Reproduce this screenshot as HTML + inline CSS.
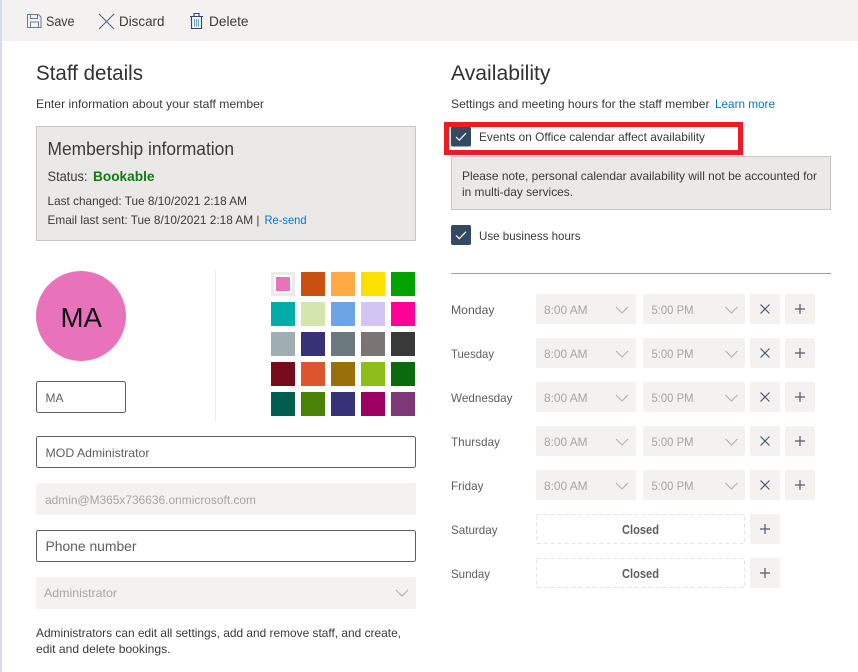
<!DOCTYPE html>
<html lang="en">
<head>
<meta charset="utf-8">
<title>Staff details</title>
<style>
html,body{margin:0;padding:0;background:#fff;width:858px;height:672px;overflow:hidden}
svg{display:block}
text{font-family:"Liberation Sans",sans-serif;font-size:12px;fill:#3b3a39}
.t{font-size:21px;fill:#323130}
.g{fill:#a8a6a4}
.l{fill:#0078d4}
.d{fill:#605e5c}
.sel{fill:#f3f2f1}
.ic{fill:none;stroke:#4f5b68;stroke-width:1.2}
.ch{fill:none;stroke:#b0aeac;stroke-width:1}
</style>
</head>
<body>
<svg width="858" height="672" viewBox="0 0 858 672" xmlns="http://www.w3.org/2000/svg">
<defs>
<g id="sl">
<rect x="536" y="0" width="100" height="30" rx="2" class="sel"/>
<rect x="643" y="0" width="102" height="30" rx="2" class="sel"/>
<rect x="750" y="0" width="30" height="30" rx="2" class="sel"/>
<rect x="785" y="0" width="30" height="30" rx="2" class="sel"/>
<path class="ch" d="M616 13l6 6 6-6M725.500 13l6 6 6-6"/>
<path class="ic" d="M760.500 10.500l9 9M769.500 10.500l-9 9M795 15h10M800 10v10"/>
</g>
<g id="cl">
<rect x="536.500" y="0.500" width="208" height="29" fill="#fff" stroke="#e6e4e2" stroke-dasharray="4 3"/>
<rect x="750" y="0" width="30" height="30" rx="2" class="sel"/>
<path class="ic" d="M760 15h10M765 10v10"/>
</g>
<g id="cb">
<rect x="451" y="0" width="20" height="20" rx="2" fill="#344a60"/>
<path d="M456 10.500l3.300 3.200 6.700-7" fill="none" stroke="#fff" stroke-width="1.200"/>
</g>
</defs>

<rect x="0" y="0" width="858" height="672" fill="#fff"/>
<rect x="0" y="0" width="858" height="41" fill="#f3f2f1"/>
<rect x="0" y="0" width="2" height="672" fill="#d5deee"/>

<!-- toolbar -->
<path d="M27.500 14.500h11l2.500 2.500v10.500h-13.500z" fill="none" stroke="#6b7ba0" stroke-width="1"/>
<path d="M30.500 14.500v4h7v-4M30.500 27.500v-5.500h8v5.500" fill="none" stroke="#6b7ba0" stroke-width="1"/>
<text x="46" y="26" style="font-size:14px" textLength="28.500" lengthAdjust="spacingAndGlyphs">Save</text>
<path d="M99 14l15 15M114 14l-15 15" fill="none" stroke="#4d5f78" stroke-width="1"/>
<text x="119" y="26" style="font-size:14px" textLength="45.500" lengthAdjust="spacingAndGlyphs">Discard</text>
<path d="M190 16.500h13M194 16v-2.500h5v2.500M191.500 16.500v12h10v-12" fill="none" stroke="#2f4a68" stroke-width="1.100"/>
<path d="M194.500 19v7.500M196.500 19v7.500M198.500 19v7.500" fill="none" stroke="#6fa0c8" stroke-width="1"/>
<text x="209" y="26" style="font-size:14px" textLength="39.500" lengthAdjust="spacingAndGlyphs">Delete</text>

<!-- staff details -->
<text class="t" x="36" y="80" textLength="107" lengthAdjust="spacingAndGlyphs">Staff details</text>
<text x="36" y="108" textLength="228" lengthAdjust="spacingAndGlyphs">Enter information about your staff member</text>
<rect x="36.500" y="126.500" width="379" height="114" fill="#ebe9e8" stroke="#c8c6c4"/>
<text x="47.500" y="155" style="font-size:18px" textLength="186.500" lengthAdjust="spacingAndGlyphs">Membership information</text>
<text x="47.500" y="181" style="font-size:14px" textLength="40" lengthAdjust="spacingAndGlyphs">Status:</text>
<text x="93" y="181" style="font-size:14px;font-weight:bold;fill:#107c10" textLength="61.500" lengthAdjust="spacingAndGlyphs">Bookable</text>
<text x="47.500" y="205" textLength="199.500" lengthAdjust="spacingAndGlyphs">Last changed: Tue 8/10/2021 2:18 AM</text>
<text x="47.500" y="224" textLength="212" lengthAdjust="spacingAndGlyphs">Email last sent: Tue 8/10/2021 2:18 AM |</text>
<text class="l" x="264.500" y="224" textLength="42" lengthAdjust="spacingAndGlyphs">Re-send</text>

<!-- avatar -->
<circle cx="81" cy="316" r="45" fill="#e873bb"/>
<text x="60.500" y="327" style="font-size:28px;fill:#111" textLength="41.500" lengthAdjust="spacingAndGlyphs">MA</text>
<rect x="36.500" y="381.500" width="89" height="31" rx="2" fill="#fff" stroke="#605e5c"/>
<text class="d" x="45.500" y="402" textLength="18" lengthAdjust="spacingAndGlyphs">MA</text>
<rect x="215" y="271" width="1" height="150" fill="#edebe9"/>

<!-- swatches -->
<rect x="271" y="272" width="24" height="24" fill="#edebe9"/>
<rect x="274" y="275" width="18" height="18" fill="#fff"/>
<rect x="276" y="277" width="14" height="14" fill="#e873bb"/>
<rect x="301" y="272" width="24" height="24" fill="#ca5010"/>
<rect x="331" y="272" width="24" height="24" fill="#ffaa44"/>
<rect x="361" y="272" width="24" height="24" fill="#fce100"/>
<rect x="391" y="272" width="24" height="24" fill="#00a300"/>
<rect x="271" y="302" width="24" height="24" fill="#03abab"/>
<rect x="301" y="302" width="24" height="24" fill="#d5e5ae"/>
<rect x="331" y="302" width="24" height="24" fill="#6ca4e6"/>
<rect x="361" y="302" width="24" height="24" fill="#d2c5f4"/>
<rect x="391" y="302" width="24" height="24" fill="#ff0097"/>
<rect x="271" y="332" width="24" height="24" fill="#a0aeb2"/>
<rect x="301" y="332" width="24" height="24" fill="#373277"/>
<rect x="331" y="332" width="24" height="24" fill="#69797e"/>
<rect x="361" y="332" width="24" height="24" fill="#7a7574"/>
<rect x="391" y="332" width="24" height="24" fill="#393939"/>
<rect x="271" y="362" width="24" height="24" fill="#750b1c"/>
<rect x="301" y="362" width="24" height="24" fill="#dc552c"/>
<rect x="331" y="362" width="24" height="24" fill="#986f0b"/>
<rect x="361" y="362" width="24" height="24" fill="#8cbd18"/>
<rect x="391" y="362" width="24" height="24" fill="#0b6a0b"/>
<rect x="271" y="392" width="24" height="24" fill="#005e50"/>
<rect x="301" y="392" width="24" height="24" fill="#498205"/>
<rect x="331" y="392" width="24" height="24" fill="#373277"/>
<rect x="361" y="392" width="24" height="24" fill="#9b0062"/>
<rect x="391" y="392" width="24" height="24" fill="#7e3877"/>

<!-- form -->
<rect x="36.500" y="436.500" width="379" height="31" rx="2" fill="#fff" stroke="#605e5c"/>
<text class="d" x="45.500" y="457" textLength="104" lengthAdjust="spacingAndGlyphs">MOD Administrator</text>
<rect x="36" y="483" width="380" height="32" rx="2" class="sel"/>
<text class="g" x="45" y="504" textLength="211" lengthAdjust="spacingAndGlyphs">admin@M365x736636.onmicrosoft.com</text>
<rect x="36.500" y="530.500" width="379" height="31" rx="2" fill="#fff" stroke="#605e5c"/>
<text class="d" x="45.500" y="551" style="font-size:14px" textLength="91" lengthAdjust="spacingAndGlyphs">Phone number</text>
<rect x="36" y="577" width="380" height="32" rx="2" class="sel"/>
<text class="g" x="44" y="597" textLength="73" lengthAdjust="spacingAndGlyphs">Administrator</text>
<path class="ch" d="M396 590l6 6 6-6"/>
<text x="36" y="637" textLength="365" lengthAdjust="spacingAndGlyphs">Administrators can edit all settings, add and remove staff, and create,</text>
<text x="36" y="653" textLength="134.500" lengthAdjust="spacingAndGlyphs">edit and delete bookings.</text>

<!-- availability -->
<text class="t" x="451" y="80" textLength="99.500" lengthAdjust="spacingAndGlyphs">Availability</text>
<text x="451" y="108" textLength="258.500" lengthAdjust="spacingAndGlyphs">Settings and meeting hours for the staff member</text>
<text class="l" x="715" y="108" textLength="60" lengthAdjust="spacingAndGlyphs">Learn more</text>

<use href="#cb" x="0" y="126.500"/>
<rect x="446.500" y="124.500" width="294" height="28" fill="none" stroke="#ed1c24" stroke-width="5"/>
<text x="479" y="141" textLength="226" lengthAdjust="spacingAndGlyphs">Events on Office calendar affect availability</text>

<rect x="451.500" y="156.500" width="379" height="53" fill="#ebe9e8" stroke="#c8c6c4"/>
<text x="462" y="180" textLength="355" lengthAdjust="spacingAndGlyphs">Please note, personal calendar availability will not be accounted for</text>
<text x="462" y="196" textLength="111" lengthAdjust="spacingAndGlyphs">in multi-day services.</text>

<use href="#cb" x="0" y="225"/>
<text x="479" y="240" textLength="101.500" lengthAdjust="spacingAndGlyphs">Use business hours</text>
<rect x="451" y="273" width="380" height="1" fill="#a19f9d"/>

<!-- schedule -->
<use href="#sl" x="0" y="294"/>
<text class="d" x="451" y="314" textLength="43.500" lengthAdjust="spacingAndGlyphs">Monday</text>
<text class="g" x="544" y="314" textLength="43.500" lengthAdjust="spacingAndGlyphs">8:00 AM</text>
<text class="g" x="651.500" y="314" textLength="42" lengthAdjust="spacingAndGlyphs">5:00 PM</text>

<use href="#sl" x="0" y="338"/>
<text class="d" x="451" y="358" textLength="43" lengthAdjust="spacingAndGlyphs">Tuesday</text>
<text class="g" x="544" y="358" textLength="43.500" lengthAdjust="spacingAndGlyphs">8:00 AM</text>
<text class="g" x="651.500" y="358" textLength="42" lengthAdjust="spacingAndGlyphs">5:00 PM</text>

<use href="#sl" x="0" y="382"/>
<text class="d" x="451" y="402" textLength="61.500" lengthAdjust="spacingAndGlyphs">Wednesday</text>
<text class="g" x="544" y="402" textLength="43.500" lengthAdjust="spacingAndGlyphs">8:00 AM</text>
<text class="g" x="651.500" y="402" textLength="42" lengthAdjust="spacingAndGlyphs">5:00 PM</text>

<use href="#sl" x="0" y="426"/>
<text class="d" x="451" y="446" textLength="49" lengthAdjust="spacingAndGlyphs">Thursday</text>
<text class="g" x="544" y="446" textLength="43.500" lengthAdjust="spacingAndGlyphs">8:00 AM</text>
<text class="g" x="651.500" y="446" textLength="42" lengthAdjust="spacingAndGlyphs">5:00 PM</text>

<use href="#sl" x="0" y="470"/>
<text class="d" x="451" y="490" textLength="32.500" lengthAdjust="spacingAndGlyphs">Friday</text>
<text class="g" x="544" y="490" textLength="43.500" lengthAdjust="spacingAndGlyphs">8:00 AM</text>
<text class="g" x="651.500" y="490" textLength="42" lengthAdjust="spacingAndGlyphs">5:00 PM</text>

<use href="#cl" x="0" y="514"/>
<text class="d" x="451" y="534" textLength="46.500" lengthAdjust="spacingAndGlyphs">Saturday</text>
<text class="d" x="622" y="534" style="font-weight:bold;font-size:13px" textLength="37" lengthAdjust="spacingAndGlyphs">Closed</text>

<use href="#cl" x="0" y="558"/>
<text class="d" x="451" y="578" textLength="39" lengthAdjust="spacingAndGlyphs">Sunday</text>
<text class="d" x="622" y="578" style="font-weight:bold;font-size:13px" textLength="37" lengthAdjust="spacingAndGlyphs">Closed</text>
</svg>
</body>
</html>
